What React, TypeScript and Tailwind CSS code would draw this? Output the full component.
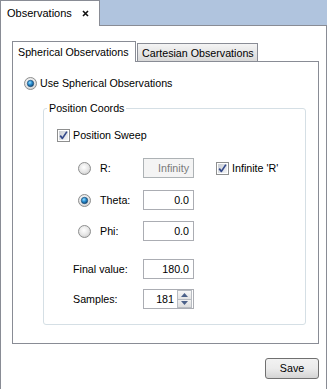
import React, { useId } from 'react';

function cleanId(id: string) {
  return id.replace(/[^a-zA-Z0-9]/g, '');
}

function Radio({ checked = false }: { checked?: boolean }) {
  const id = cleanId(useId());
  return (
    <svg width="13" height="13" viewBox="0 0 13 13" className="shrink-0">
      <defs>
        <radialGradient id={`${id}r`} cx="45%" cy="40%" r="65%">
          <stop offset="0" stopColor="#ffffff" />
          <stop offset="0.6" stopColor="#e6e6e6" />
          <stop offset="1" stopColor="#c9c9c9" />
        </radialGradient>
        <radialGradient id={`${id}b`} cx="40%" cy="35%" r="70%">
          <stop offset="0" stopColor="#9be0ff" />
          <stop offset="0.45" stopColor="#2c91d4" />
          <stop offset="1" stopColor="#0b416f" />
        </radialGradient>
      </defs>
      <circle cx="6.5" cy="6.5" r="6" fill={`url(#${id}r)`} stroke="#8e8f8f" />
      {checked && <circle cx="6.5" cy="6.5" r="3.2" fill={`url(#${id}b)`} stroke="#1c4c75" strokeWidth="0.7" />}
    </svg>
  );
}

function Check() {
  const id = cleanId(useId());
  return (
    <svg width="13" height="13" viewBox="0 0 13 13" className="shrink-0">
      <defs>
        <linearGradient id={`${id}c`} x1="0" y1="0" x2="1" y2="1">
          <stop offset="0" stopColor="#c9cdd3" />
          <stop offset="1" stopColor="#f4f5f7" />
        </linearGradient>
      </defs>
      <rect x="0.5" y="0.5" width="12" height="12" fill="#ffffff" stroke="#8e8f8f" />
      <rect x="2" y="2" width="9" height="9" fill={`url(#${id}c)`} />
      <path d="M3.2 6.6 5.4 9.4 9.9 2.6" fill="none" stroke="#34498a" strokeWidth="1.7" strokeLinejoin="round" />
    </svg>
  );
}

function Field({ value, disabled = false }: { value: string; disabled?: boolean }) {
  return (
    <div
      className={
        disabled
          ? 'w-[51px] h-[20px] shrink-0 border border-[#adb2b5] bg-[#f4f4f4] text-[#7a7a7a] flex items-center justify-end pr-[4px]'
          : 'w-[51px] h-[20px] shrink-0 border border-[#abadb3] bg-white flex items-center justify-end pr-[4px]'
      }
    >
      {value}
    </div>
  );
}

function SpinBox({ value }: { value: string }) {
  return (
    <div className="w-[51px] h-[20px] shrink-0 border border-[#abadb3] bg-white flex items-center justify-end pr-[1px]">
      <span className="mr-[3px]">{value}</span>
      <div className="flex flex-col w-[15px] h-[18px]">
        <div className="flex-1 border border-[#b8bcc2] bg-linear-to-b from-[#f7f7f7] to-[#e4e4e4] flex items-center justify-center">
          <svg width="7" height="4" viewBox="0 0 7 4"><path d="M0 4 3.5 0 7 4Z" fill="#4c6189" /></svg>
        </div>
        <div className="flex-1 border border-t-0 border-[#b8bcc2] bg-linear-to-b from-[#f0f0f0] to-[#dedede] flex items-center justify-center">
          <svg width="7" height="4" viewBox="0 0 7 4"><path d="M0 0 3.5 4 7 0Z" fill="#4c6189" /></svg>
        </div>
      </div>
    </div>
  );
}

function CoordRow({ label, value, checked = false, disabled = false, children }: { label: string; value: string; checked?: boolean; disabled?: boolean; children?: React.ReactNode }) {
  return (
    <div className="h-[20px] flex items-center pl-[21px]">
      <Radio checked={checked} />
      <span className="ml-[9px] w-[43px]">{label}</span>
      <Field value={value} disabled={disabled} />
      {children}
    </div>
  );
}

export default function App() {
  return (
    <div className="w-[327px] h-[389px] bg-[#b0c4de] flex flex-col font-['Liberation_Sans',Arial,sans-serif] text-[10.7px] text-black leading-[13px]">
      <div className="h-[25px] flex items-end shrink-0">
        <div className="relative z-10 -mb-px w-[100px] h-[26px] bg-white border border-b-0 border-[#898c95] flex items-center pl-[6px]">
          <span className="text-[11px]">Observations</span>
          <svg width="7" height="7" viewBox="0 0 7 7" className="ml-[10px]">
            <path d="M1 1 6 6M6 1 1 6" stroke="#111" strokeWidth="1.6" />
          </svg>
        </div>
      </div>

      <div className="flex-1 bg-white border border-b-0 border-[#898c95] pl-[11px] pr-[7px] pt-[15px]">
        <div className="h-[20px] flex items-end">
          <div className="relative z-10 -mb-px w-[124px] h-[21px] bg-white border border-b-0 border-[#898c95] flex items-center pl-[5px]">
            Spherical Observations
          </div>
          <div className="ml-px w-[121px] h-[18px] border border-b-0 border-[#898c95] bg-linear-to-b from-[#f4f4f4] to-[#d9d9d9] flex items-center pl-[4px] pt-[2px]">
            Cartesian Observations
          </div>
        </div>

        <div className="border border-[#898c95] pt-[15px] pl-[11px] pr-[12px] pb-[18px]">
          <div className="h-[13px] flex items-center gap-[3px]">
            <Radio checked />
            <span>Use Spherical Observations</span>
          </div>

          <fieldset className="mt-[12px] ml-[19px] border border-[#d5dfe5] rounded-[3px] p-0 pb-[15px]">
            <legend className="ml-[3px] px-[2px] leading-[13px]">Position Coords</legend>
            <div className="pl-[13px] pt-[14px]">
              <div className="h-[13px] flex items-center gap-[3px]">
                <Check />
                <span>Position Sweep</span>
              </div>

              <div className="mt-[16px]">
                <CoordRow label="R:" value="Infinity" disabled>
                  <div className="ml-[22px] flex items-center gap-[3px]">
                    <Check />
                    <span>Infinite 'R'</span>
                  </div>
                </CoordRow>
              </div>
              <div className="mt-[12px]">
                <CoordRow label="Theta:" value="0.0" checked />
              </div>
              <div className="mt-[11px]">
                <CoordRow label="Phi:" value="0.0" />
              </div>

              <div className="mt-[18px] h-[20px] flex items-center pl-[16px]">
                <span className="w-[70px]">Final value:</span>
                <Field value="180.0" />
              </div>
              <div className="mt-[10px] h-[20px] flex items-center pl-[16px]">
                <span className="w-[70px]">Samples:</span>
                <SpinBox value="181" />
              </div>
            </div>
          </fieldset>
        </div>

        <div className="mt-[14px] flex justify-end">
          <button className="w-[54px] h-[21px] border border-[#707070] rounded-[3px] bg-linear-to-b from-[#f2f2f2] via-[#ebebeb] to-[#d4d4d4] flex items-center justify-center">
            Save
          </button>
        </div>
      </div>
    </div>
  );
}
